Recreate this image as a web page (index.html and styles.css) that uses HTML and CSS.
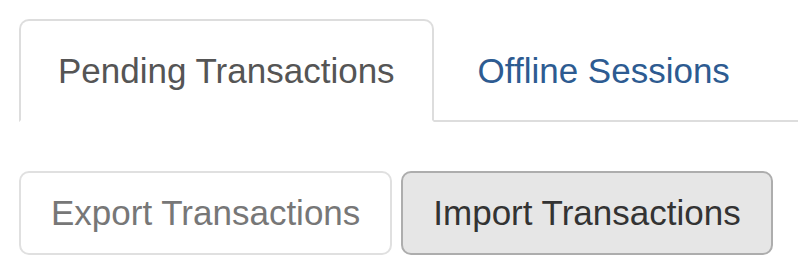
FILE: index.html
```html
<!DOCTYPE html>
<html>
<head>
<meta charset="utf-8">
<link rel="stylesheet" href="styles.css">
</head>
<body>
<div class="page">
  <ul class="tabs">
    <li class="tab tab-active"><a href="#">Pending Transactions</a></li>
    <li class="tab"><a href="#">Offline Sessions</a></li>
  </ul>
  <div class="actions">
    <button class="btn btn-disabled">Export Transactions</button>
    <button class="btn btn-pressed">Import Transactions</button>
  </div>
</div>
</body>
</html>
```
FILE: styles.css
```css
html, body {
  margin: 0;
  padding: 0;
  background: #fff;
  overflow: hidden;
}
body {
  font-family: "Liberation Sans", Arial, sans-serif;
  font-size: 35px;
  line-height: 50px;
  color: #333;
}
.page {
  padding: 19px 0 0 19px;
}
.tabs {
  list-style: none;
  margin: 0 0 49px 0;
  padding: 0;
  display: flex;
  border-bottom: 2px solid #ddd;
}
.tab {
  margin-bottom: -2px;
  margin-right: 5px;
  flex: none;
}
.tab a {
  display: block;
  white-space: nowrap;
  padding: 25px 37px 24px;
  border: 2px solid transparent;
  border-radius: 10px 10px 0 0;
  text-decoration: none;
  color: #2d5b91;
}
.tab-active a {
  color: #555;
  background: #fff;
  border-color: #ddd #ddd transparent #ddd;
}
.actions {
  display: flex;
  gap: 9px;
}
.btn {
  font-family: inherit;
  font-size: 35px;
  line-height: 50px;
  white-space: nowrap;
  padding: 15px 30px;
  border-radius: 10px;
  border: 2px solid;
  margin: 0;
}
.btn-disabled {
  background: #fff;
  color: #777;
  border-color: #e0e0e0;
}
.btn-pressed {
  background: #e6e6e6;
  color: #333;
  border-color: #adadad;
}
```
